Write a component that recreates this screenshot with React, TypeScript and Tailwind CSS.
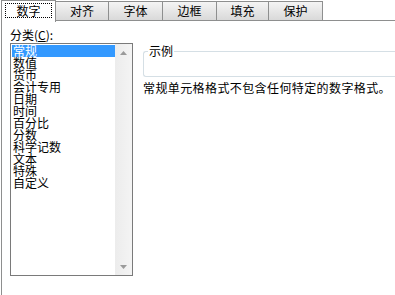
import React from 'react'

const FONT = { fontFamily: '"Noto Sans CJK SC", "Noto Sans", sans-serif' }

const TABS = [
  { label: '对齐', w: 'w-[53px]' },
  { label: '字体', w: 'w-[54px]' },
  { label: '边框', w: 'w-[54px]' },
  { label: '填充', w: 'w-[52px]' },
  { label: '保护', w: 'w-[54px]' },
]

const CATEGORIES = [
  '常规', '数值', '货币', '会计专用', '日期', '时间',
  '百分比', '分数', '科学记数', '文本', '特殊', '自定义',
]

function TabStrip() {
  return (
    <div className="flex h-[21px] items-stretch">
      {/* active tab sits over the strip's bottom line */}
      <div className="relative z-10 ml-px h-[22px] w-[55px] border-x border-t border-[#8e8f8f] bg-white px-[3px] pt-[2px]">
        <div className="flex h-[15px] items-center justify-center border border-dotted border-black text-[12px] leading-none text-black">
          数字
        </div>
      </div>
      {TABS.map((t) => (
        <div
          key={t.label}
          className={`${t.w} mt-px flex items-center justify-center border-r border-t border-b border-[#8e8f8f] bg-gradient-to-b from-[#f4f4f4] to-[#d9d9d9] text-[12px] leading-none text-black`}
        >
          {t.label}
        </div>
      ))}
      <div className="flex-1 border-b border-[#8e8f8f]" />
    </div>
  )
}

function CategoryList() {
  return (
    <div className="flex h-[233px] w-[123px] border border-[#7a7a7a] bg-white">
      <div className="flex-1 pl-px pt-px">
        {CATEGORIES.map((c, i) => (
          <div
            key={c}
            className={`h-[12px] pl-px text-[12px] leading-[12px] ${
              i === 0 ? 'bg-[#3399ff] text-white' : 'text-black'
            }`}
          >
            {c}
          </div>
        ))}
      </div>
      <div className="flex w-[17px] flex-col justify-between bg-gradient-to-r from-[#ececec] to-[#f4f4f4]">
        <div className="flex h-[17px] items-center justify-center">
          <svg width="7" height="4" viewBox="0 0 7 4">
            <path d="M0 4 L3.5 0 L7 4 Z" fill="#9a9a9a" />
          </svg>
        </div>
        <div className="flex h-[17px] items-center justify-center">
          <svg width="7" height="4" viewBox="0 0 7 4">
            <path d="M0 0 L3.5 4 L7 0 Z" fill="#9a9a9a" />
          </svg>
        </div>
      </div>
    </div>
  )
}

export default function App() {
  return (
    <div className="h-[295px] w-[395px] overflow-hidden bg-white" style={FONT}>
      <TabStrip />
      <div className="ml-px flex h-[274px] border-l border-[#8e8f8f]">
        <div className="ml-[8px] flex flex-col">
          <div className="mt-[5px] h-[17px] text-[12px] leading-[17px] text-black">
            分类(<span className="underline">C</span>):
          </div>
          <CategoryList />
        </div>
        <div className="ml-[8px] flex flex-1 flex-col">
          {/* 示例 group box */}
          <div className="relative ml-[2px] mt-[30px] h-[26px] rounded-l-[3px] border-y border-l border-[#d5dfe5]">
            <span className="absolute -top-[8px] left-[4px] bg-white px-[1px] text-[12px] leading-[14px] text-black">
              示例
            </span>
          </div>
          <div className="ml-[2px] mt-[4px] text-[12px] leading-[14px] tracking-[0.4px] text-black">
            常规单元格格式不包含任何特定的数字格式。
          </div>
        </div>
      </div>
    </div>
  )
}
